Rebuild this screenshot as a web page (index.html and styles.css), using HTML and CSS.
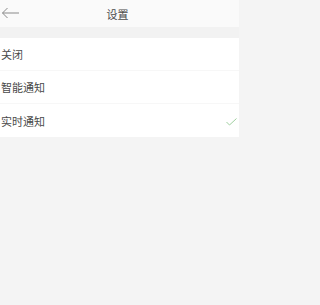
FILE: index.html
```html
<!DOCTYPE html>
<html lang="zh">
<head>
<meta charset="utf-8">
<link rel="stylesheet" href="styles.css">
</head>
<body>
<div class="page">
  <header class="topbar">
    <span class="back">
      <svg width="18" height="12" viewBox="0 0 18 12"><path d="M18 6H1.5M6.5 1L1.5 6l5 5" fill="none" stroke="#8a8a8a" stroke-width="1"/></svg>
    </span>
    <span class="title">设置</span>
  </header>
  <div class="gap"></div>
  <ul class="list">
    <li class="row">关闭</li>
    <li class="row">智能通知</li>
    <li class="row">实时通知<svg class="check" width="11" height="8" viewBox="0 0 11 8"><path d="M0.5 4l3 3L10.5 0.5" fill="none" stroke="#9fcf9f" stroke-width="1"/></svg></li>
  </ul>
</div>
</body>
</html>
```
FILE: styles.css
```css
html, body {
  margin: 0;
  padding: 0;
  background: #f4f4f4;
}
.page {
  width: 239px;
  font-family: "Noto Sans CJK SC", "Noto Sans", sans-serif;
  color: #4a4a4a;
}
.topbar {
  height: 27px;
  background: #fafafa;
  display: flex;
  align-items: center;
  justify-content: center;
  position: relative;
}
.back {
  position: absolute;
  left: 1px;
  top: 7px;
  display: flex;
}
.title {
  font-size: 11px;
  line-height: 12px;
  color: #4a4a4a;
  margin-right: 4px;
}
.gap {
  height: 11px;
  background: #f2f2f2;
}
.list {
  list-style: none;
  margin: 0;
  padding: 0;
  background: #fff;
}
.row {
  height: 33px;
  display: flex;
  align-items: center;
  justify-content: space-between;
  padding-left: 1px;
  padding-right: 2px;
  font-size: 11px;
  color: #4a4a4a;
  border-bottom: 1px solid #f7f7f7;
  box-sizing: border-box;
}
.row:last-child {
  border-bottom: none;
}
.check {
  margin-top: 2px;
}
```
